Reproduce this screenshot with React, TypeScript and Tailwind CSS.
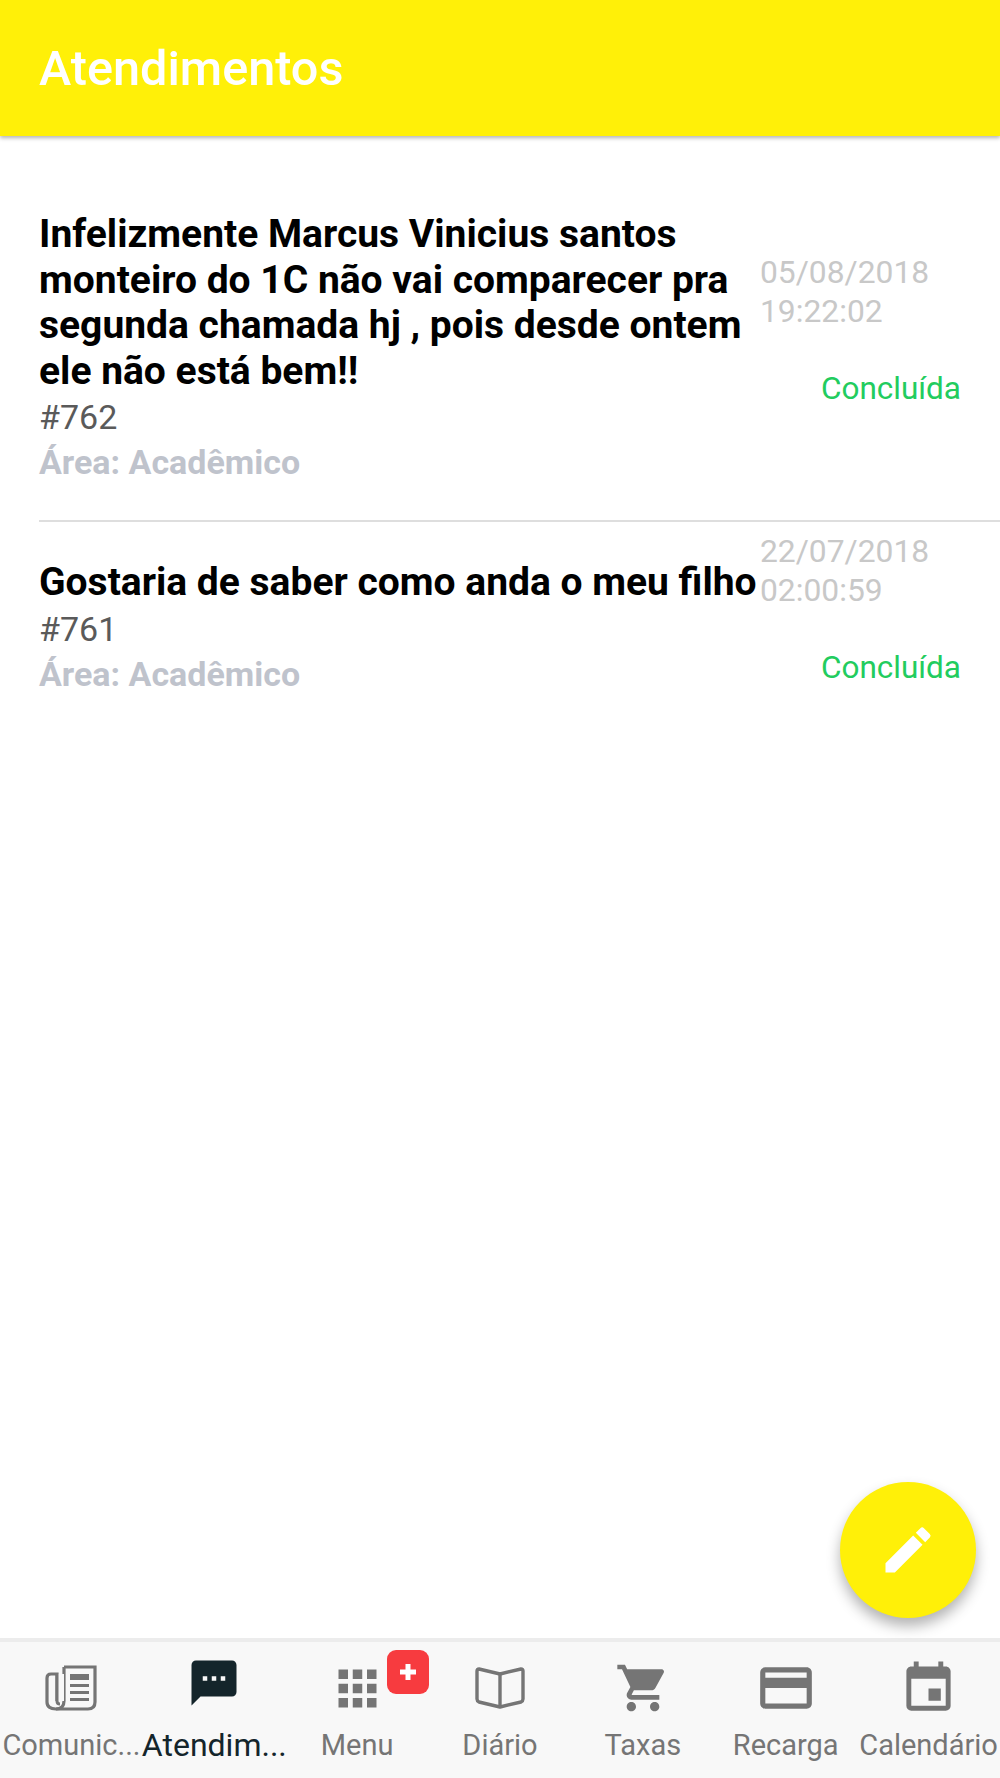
import React from "react";
import { MdShoppingCart, MdCreditCard, MdEvent, MdEdit, MdSms, MdApps } from "react-icons/md";

const font = { fontFamily: "Roboto, sans-serif" };

function Newspaper() {
  return (
    <svg width="52" height="46" viewBox="0 0 52 46" fill="none">
      <path d="M19 2 H50 V37 Q50 44 43 44 H11 Q2 44 2 37 V13 Q2 9 6 9 H12 V36" stroke="#757575" strokeWidth="3.2" />
      <path d="M19 2 V36 Q19 44 11 44" stroke="#757575" strokeWidth="3.2" />
      <rect x="12" y="9" width="7" height="27" fill="#f8f8f8" />
      <path d="M12 9 V36 Q12 39 15 39" stroke="#757575" strokeWidth="3" />
      <rect x="25" y="9" width="19" height="6" fill="#757575" />
      <rect x="25" y="19" width="19" height="3" fill="#757575" />
      <rect x="25" y="26" width="19" height="3" fill="#757575" />
      <rect x="25" y="33" width="19" height="3" fill="#757575" />
    </svg>
  );
}

function Book() {
  return (
    <svg width="50" height="44" viewBox="0 0 50 44" fill="none" stroke="#757575" strokeWidth="3.4" strokeLinejoin="round">
      <path d="M25 8 L4 3 Q2 3 2 5 V33 Q2 35 4 36 L25 41 L46 36 Q48 35 48 33 V5 Q48 3 46 3 Z" />
      <path d="M25 8 V41" />
    </svg>
  );
}

const Tab = ({ label, active, icon, badge }: { label: string; active?: boolean; icon: React.ReactNode; badge?: boolean }) => (
  <div className="relative flex min-w-0 flex-1 flex-col items-center">
    <div className="flex h-[85px] w-full items-center justify-center pt-[7px]">{icon}</div>
    <div className={`flex w-full justify-center whitespace-nowrap leading-[36px] ${active ? "text-[32px] text-[#14252b]" : "text-[29px] text-[#757575]"}`}>
      {label}
    </div>
    {badge && (
      <div className="absolute left-[101px] top-[8px] flex h-[44px] w-[42px] items-center justify-center rounded-[9px] bg-[#f73b3f]">
        <svg width="18" height="18" viewBox="0 0 18 18" fill="#fff">
          <rect x="6.5" y="1" width="5" height="16" />
          <rect x="1" y="6.5" width="16" height="5" />
        </svg>
      </div>
    )}
  </div>
);

const Ticket = ({ title, id, date, time, first }: { title: string; id: string; date: string; time: string; first?: boolean }) => (
  <div className={`flex ${first ? "h-[386px] border-b-2 border-[#dedede]" : ""}`}>
    <div className={`w-[721px] shrink-0 ${first ? "pt-[76px]" : "pt-[38px]"}`}>
      <div className="text-[39px] font-bold leading-[45.5px] text-black">{title}</div>
      <div className="text-[34px] leading-[46px] text-[#5a5a5a]">{id}</div>
      <div className="text-[34px] font-bold leading-[44px] text-[#bfc3cc]">Área: Acadêmico</div>
    </div>
    <div className={`flex-1 ${first ? "pt-[117px]" : "pt-[10px]"}`}>
      <div className="text-[31.8px] leading-[39px] text-[#c8c8c8]">{date}</div>
      <div className="text-[31.8px] leading-[39px] text-[#c8c8c8]">{time}</div>
      <div className="mt-[38px] pr-[39px] text-right text-[31.5px] leading-[39px] text-[#22cc5e]">Concluída</div>
    </div>
  </div>
);

export default function App() {
  return (
    <div className="flex h-[1778px] w-[1000px] flex-col overflow-hidden bg-white" style={font}>
      <header className="z-10 flex h-[136px] shrink-0 items-center bg-[#fff008] pl-[39px] pt-[2px] shadow-[0_2px_4px_rgba(0,0,0,0.3)]">
        <h1 className="text-[48.6px] font-medium text-white">Atendimentos</h1>
      </header>
      <main className="relative flex-1 pl-[39px]">
        <Ticket
          first
          title="Infelizmente Marcus Vinicius santos monteiro do 1C não vai comparecer pra segunda chamada hj , pois desde ontem ele não está bem!!"
          id="#762"
          date="05/08/2018"
          time="19:22:02"
        />
        <Ticket title="Gostaria de saber como anda o meu filho" id="#761" date="22/07/2018" time="02:00:59" />
        <button className="absolute left-[840px] top-[1346px] flex h-[136px] w-[136px] items-center justify-center rounded-full bg-[#fff008] shadow-[0_8px_14px_rgba(0,0,0,0.3)]">
          <MdEdit size={60} color="#fff" />
        </button>
      </main>
      <nav className="flex h-[140px] shrink-0 border-t-[4px] border-[#ececec] bg-[#f8f8f8]">
        <Tab label="Comunic..." icon={<Newspaper />} />
        <Tab label="Atendim..." active icon={<MdSms size={54} color="#14252b" className="mb-[11px]" />} />
        <Tab label="Menu" icon={<MdApps size={57} color="#757575" />} badge />
        <Tab label="Diário" icon={<Book />} />
        <Tab label="Taxas" icon={<MdShoppingCart size={56} color="#757575" />} />
        <Tab label="Recarga" icon={<MdCreditCard size={62} color="#757575" />} />
        <Tab label="Calendário" icon={<MdEvent size={59} color="#757575" />} />
      </nav>
    </div>
  );
}
